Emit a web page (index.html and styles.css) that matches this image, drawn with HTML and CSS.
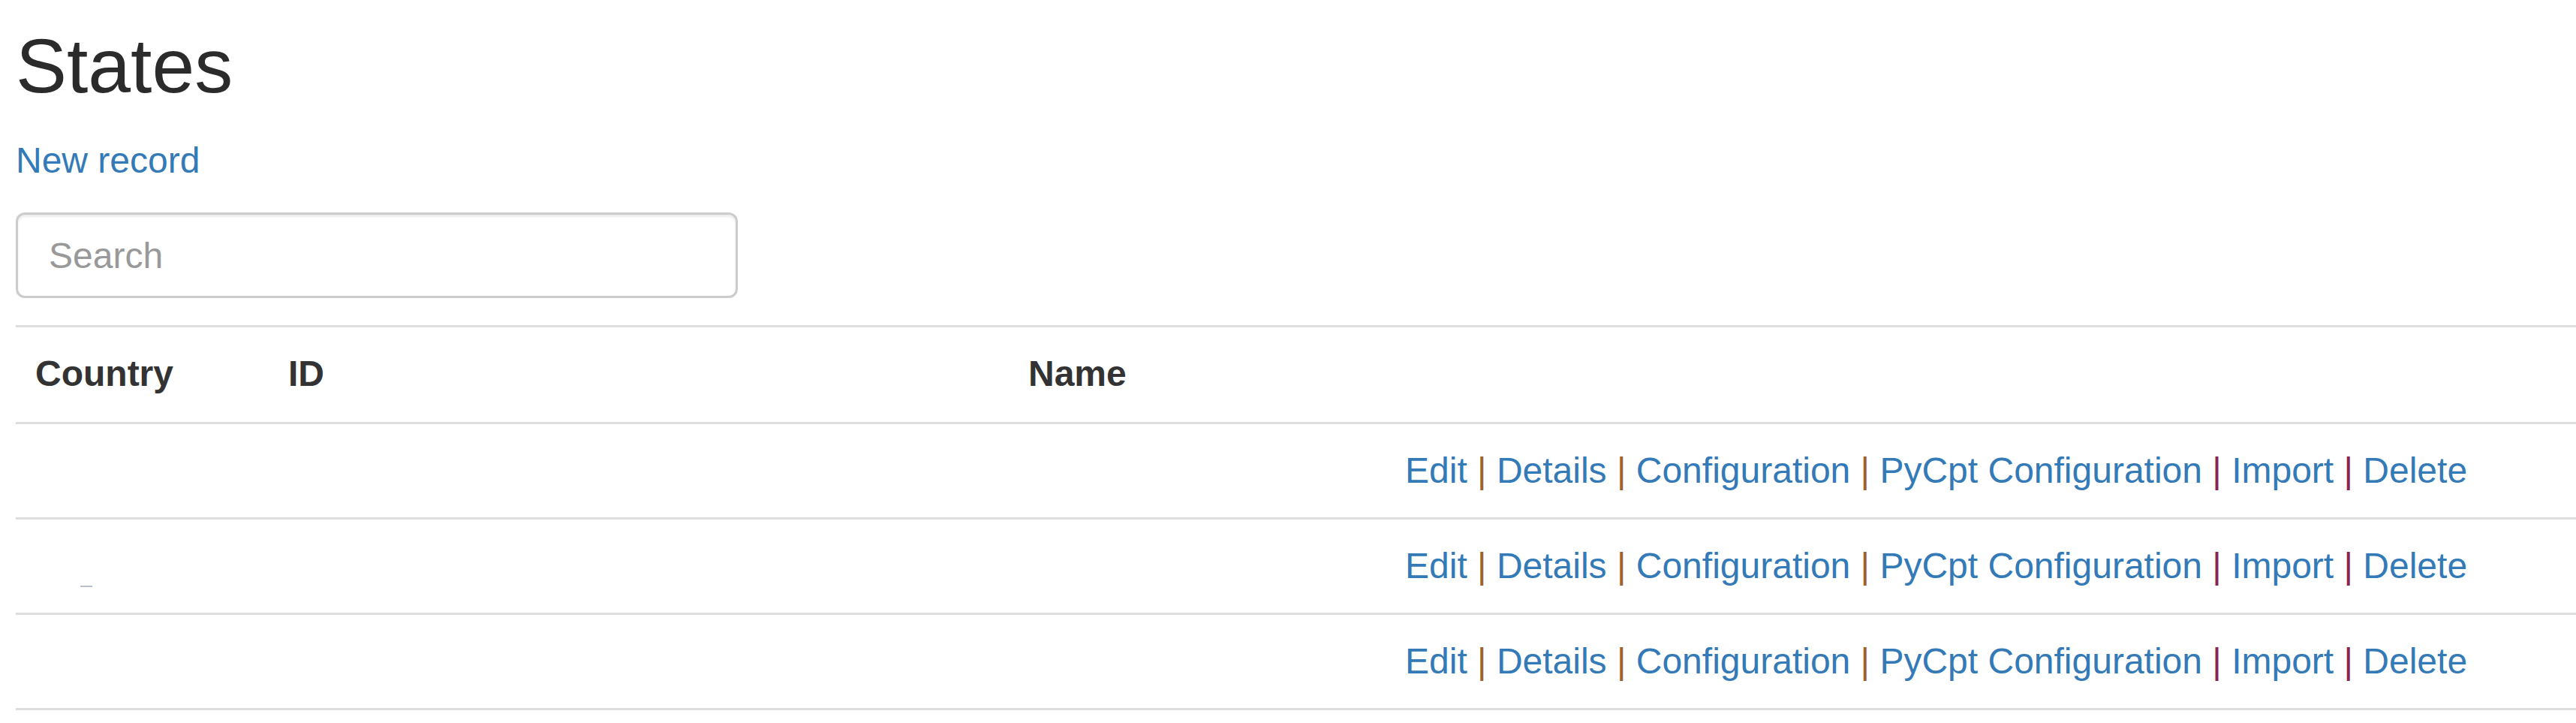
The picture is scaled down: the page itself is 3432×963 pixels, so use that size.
FILE: index.html
```html
<!DOCTYPE html>
<html lang="en">
<head>
<meta charset="utf-8">
<title>States</title>
<link rel="stylesheet" href="styles.css">
</head>
<body>
<div class="page">
  <h2 class="title">States</h2>
  <p class="new-link"><a href="#">New record</a></p>
  <form class="search">
    <input class="search-input" type="text" placeholder="Search">
  </form>
  <table class="grid">
    <colgroup>
      <col class="c-country">
      <col class="c-id">
      <col class="c-name">
      <col class="c-actions">
    </colgroup>
    <thead>
      <tr><th>Country</th><th>ID</th><th>Name</th><th></th></tr>
    </thead>
    <tbody>
      <tr>
        <td></td><td></td><td></td>
        <td class="acts"><a href="#">Edit</a> <span class="sep sep-a">|</span> <a href="#">Details</a> <span class="sep sep-a">|</span> <a href="#">Configuration</a> <span class="sep sep-a">|</span> <a href="#">PyCpt Configuration</a> <span class="sep sep-b">|</span> <a href="#">Import</a> <span class="sep sep-b">|</span> <a href="#">Delete</a></td>
      </tr>
      <tr>
        <td><span class="tick"></span></td><td></td><td></td>
        <td class="acts"><a href="#">Edit</a> <span class="sep sep-a">|</span> <a href="#">Details</a> <span class="sep sep-a">|</span> <a href="#">Configuration</a> <span class="sep sep-a">|</span> <a href="#">PyCpt Configuration</a> <span class="sep sep-b">|</span> <a href="#">Import</a> <span class="sep sep-b">|</span> <a href="#">Delete</a></td>
      </tr>
      <tr>
        <td></td><td></td><td></td>
        <td class="acts"><a href="#">Edit</a> <span class="sep sep-a">|</span> <a href="#">Details</a> <span class="sep sep-a">|</span> <a href="#">Configuration</a> <span class="sep sep-a">|</span> <a href="#">PyCpt Configuration</a> <span class="sep sep-b">|</span> <a href="#">Import</a> <span class="sep sep-b">|</span> <a href="#">Delete</a></td>
      </tr>
    </tbody>
  </table>
</div>
</body>
</html>
```

FILE: styles.css
```css
html, body {
  margin: 0;
  padding: 0;
  background: #ffffff;
}

body {
  font-family: "Liberation Sans", Arial, Helvetica, sans-serif;
  font-size: 48px;
  line-height: 70px;
  color: #333333;
}

.page {
  padding-left: 21px;
}

.title {
  margin: 32px 0 35px;
  font-size: 102px;
  line-height: 112px;
  font-weight: normal;
  color: #2b2b2b;
}

.new-link {
  margin: 0 0 34px;
}

a {
  color: #337ab7;
  text-decoration: none;
}

.search {
  margin: 0 0 36px;
}

.search-input {
  display: block;
  box-sizing: border-box;
  width: 962px;
  height: 114px;
  margin: 0;
  padding: 0 41px;
  border: 3px solid #cccccc;
  border-radius: 12px;
  box-shadow: inset 0 3px 3px rgba(0, 0, 0, 0.075);
  font-family: "Liberation Sans", Arial, Helvetica, sans-serif;
  font-size: 48px;
  color: #555555;
  background: #ffffff;
  outline: none;
}

.search-input::placeholder {
  color: #999999;
}

.grid {
  width: 100%;
  table-layout: fixed;
  border-collapse: collapse;
  border-spacing: 0;
}

.c-country { width: 337px; }
.c-id { width: 986px; }
.c-name { width: 502px; }

.grid th,
.grid td {
  padding: 27px 26px;
  text-align: left;
  vertical-align: top;
  border-bottom: 3px solid #dddddd;
  height: 70px;
  box-sizing: content-box;
  white-space: nowrap;
}

.grid th {
  padding-bottom: 29px;
  font-weight: bold;
  color: #333333;
  border-top: 3px solid #dddddd;
}

.sep {
  color: #333333;
}

.sep-a {
  color: #9a6230;
}

.sep-b {
  color: #8a2350;
}

.tick {
  display: inline-block;
  width: 16px;
  height: 2px;
  margin-left: 60px;
  vertical-align: -12px;
  background: #b9c0cc;
}
```
